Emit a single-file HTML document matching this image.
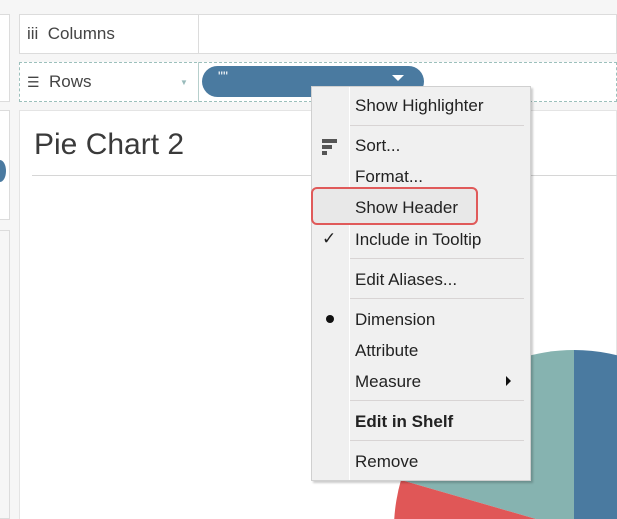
<!DOCTYPE html>
<html><head><style>
*{margin:0;padding:0;box-sizing:border-box}
html,body{width:617px;height:519px;overflow:hidden}
body{background:#f6f6f6;position:relative;font-family:"Segoe UI","Liberation Sans",sans-serif;color:#333}
.a{position:absolute}
.box{position:absolute;background:#fff;border:1px solid #dcdcdc}
.mi{position:absolute;left:355px;font-size:17px;color:#222;line-height:20px}
.sep{position:absolute;left:350px;width:174px;height:1px;background:#d8d4d4}
</style></head><body>
<div class="box" style="left:-2px;top:14px;width:12px;height:88px"></div>
<div class="box" style="left:-2px;top:110px;width:12px;height:110px"></div>
<div class="a" style="left:-6px;top:160px;width:12px;height:22px;border-radius:50%;background:#4a7aa0"></div>
<div class="box" style="left:-2px;top:230px;width:12px;height:289px;background:#f6f6f6"></div>
<div class="box" style="left:19px;top:14px;width:598px;height:40px"></div>
<div class="a" style="left:198px;top:14px;width:1px;height:40px;background:#dcdcdc"></div>
<div class="a" style="left:27px;top:24px;font-size:17px;color:#444">iii&nbsp; Columns</div>
<div class="box" style="left:19px;top:62px;width:598px;height:40px;border:1px dashed #9cc0bc"></div>
<div class="a" style="left:198px;top:62px;width:1px;height:40px;background:#b7cfcc"></div>
<div class="a" style="left:27px;top:72px;font-size:17px;color:#444"><span style="font-size:14px">☰</span>&nbsp; Rows</div>
<div class="a" style="left:180px;top:78px;font-size:8px;color:#9bb">▼</div>
<div class="a" style="left:202px;top:66px;width:222px;height:31px;border-radius:16px;background:#4a7aa0"></div>
<div class="a" style="left:218px;top:68px;font-size:14px;color:#fff">""</div>
<div class="a" style="left:392px;top:75px;width:0;height:0;border-left:6px solid transparent;border-right:6px solid transparent;border-top:6px solid #fff"></div>
<div class="box" style="left:19px;top:110px;width:598px;height:409px;border-color:#e4e4e4;border-bottom:none"></div>
<div class="a" style="left:34px;top:128px;font-size:30px;font-weight:300;color:#3a3a3a;font-family:'Liberation Sans',sans-serif">Pie Chart 2</div>
<div class="a" style="left:32px;top:175px;width:585px;height:1px;background:#d6d6d6"></div>
<svg class="a" style="left:0;top:0" width="617" height="519">
<path d="M574 530 L574 350 A180 180 0 0 0 401 480 Z" fill="#86b3b0"/>
<path d="M574 530 L401 480 A180 180 0 0 0 574 710 Z" fill="#e05757"/>
<path d="M574 530 L574 350 A180 180 0 0 1 574 710 Z" fill="#4a7aa0"/>
</svg>
<div class="a" style="left:311px;top:86px;width:220px;height:395px;background:#f0f0f0;border:1px solid #d0d0d0;box-shadow:2px 2px 2px rgba(0,0,0,.2)"></div>
<div class="a" style="left:349px;top:87px;width:1px;height:393px;background:#fff"></div>
<div class="a" style="left:311px;top:187px;width:167px;height:38px;border:2px solid #e05a5a;border-radius:6px;background:#e8e8e8"></div>
<div class="mi" style="top:96px">Show Highlighter</div>
<div class="sep" style="top:125px"></div>
<div class="a" style="left:322px;top:139px;width:15px;height:4px;background:#555"></div>
<div class="a" style="left:322px;top:145px;width:10px;height:4px;background:#555"></div>
<div class="a" style="left:322px;top:151px;width:5px;height:4px;background:#555"></div>
<div class="mi" style="top:136px">Sort...</div>
<div class="mi" style="top:167px">Format...</div>
<div class="mi" style="top:198px">Show Header</div>
<div class="a" style="left:322px;top:229px;font-size:17px;color:#222">✓</div>
<div class="mi" style="top:230px">Include in Tooltip</div>
<div class="sep" style="top:258px"></div>
<div class="mi" style="top:270px">Edit Aliases...</div>
<div class="sep" style="top:298px"></div>
<div class="a" style="left:326px;top:315px;width:8px;height:8px;border-radius:50%;background:#111"></div>
<div class="mi" style="top:310px">Dimension</div>
<div class="mi" style="top:341px">Attribute</div>
<div class="mi" style="top:372px">Measure</div>
<div class="a" style="left:506px;top:376px;width:0;height:0;border-top:5px solid transparent;border-bottom:5px solid transparent;border-left:5px solid #111"></div>
<div class="sep" style="top:400px"></div>
<div class="mi" style="top:412px;font-weight:bold">Edit in Shelf</div>
<div class="sep" style="top:440px"></div>
<div class="mi" style="top:452px">Remove</div>
</body></html>
